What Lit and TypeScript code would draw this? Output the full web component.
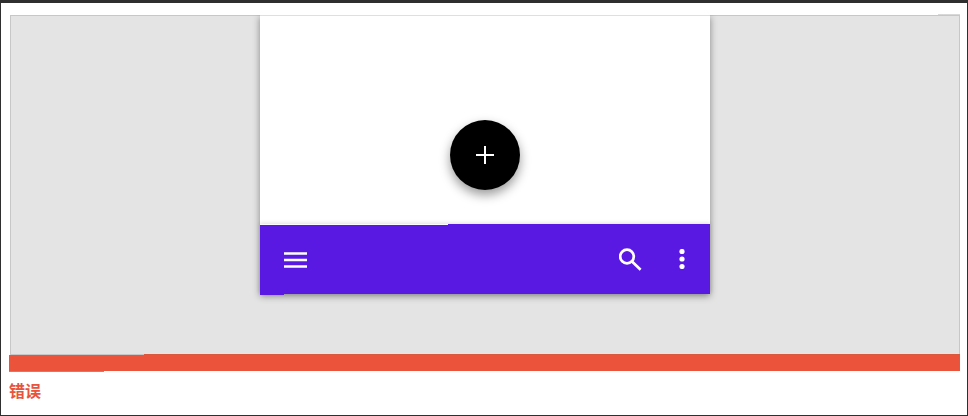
import { LitElement, html, css } from "lit";
import { customElement } from "lit/decorators.js";

@customElement("app-root")
export class AppRoot extends LitElement {
  static styles = css`
    :host {
      display: block;
      width: 968px;
      height: 416px;
      box-sizing: border-box;
      background: #fff;
      border: 1px solid #2f2f2f;
      border-top-width: 3px;
      padding: 12px 6px 0 8px;
      font-family: "Noto Sans CJK SC", "Liberation Sans", sans-serif;
    }
    .frame {
      position: relative;
      margin-left: 1px;
      width: 950px;
      height: 340px;
    }
    .frame::before {
      content: "";
      position: absolute;
      top: -1px;
      right: 0;
      width: 22px;
      height: 1px;
      background: #d8d8d8;
    }
    .stage {
      position: relative;
      height: 100%;
      background: #e4e4e4;
      overflow: hidden;
      display: flex;
      justify-content: center;
    }
    .stage::after {
      content: "";
      position: absolute;
      inset: 0;
      border: 1px solid rgba(0, 0, 0, 0.125);
      pointer-events: none;
    }
    .phone {
      width: 450px;
      height: 279px;
      display: flex;
      flex-direction: column;
      box-shadow: 0 2px 7px rgba(0, 0, 0, 0.42);
    }
    .body {
      flex: 1;
      background: #fff;
      display: flex;
      justify-content: center;
      align-items: flex-end;
      padding-bottom: 34px;
    }
    .fab {
      width: 70px;
      height: 70px;
      border-radius: 50%;
      background: #000;
      display: flex;
      align-items: center;
      justify-content: center;
      box-shadow: 0 5px 11px rgba(0, 0, 0, 0.4);
    }
    .bar {
      height: 70px;
      background: #5a19e3;
      box-shadow: 0 -1px 4px rgba(0, 0, 0, 0.12);
      display: flex;
      align-items: center;
      padding: 0 25px 0 24px;
      position: relative;
    }
    .bar::before {
      content: "";
      position: absolute;
      top: 0;
      left: 0;
      width: 188px;
      height: 1px;
      background: #fbfbfb;
    }
    .bar::after {
      content: "";
      position: absolute;
      bottom: -1px;
      left: 0;
      width: 24px;
      height: 1px;
      background: #5a19e3;
    }
    .spacer {
      flex: 1;
    }
    svg {
      display: block;
      fill: none;
      stroke: #fff;
    }
    .menu {
      margin-top: 2px;
    }
    .search {
      margin-right: 36px;
    }
    .dots {
      fill: #fff;
      stroke: none;
    }
    .error-bar {
      position: relative;
      width: 951px;
      height: 16px;
      background: #eb533b;
    }
    .error-bar::before {
      content: "";
      position: absolute;
      top: -1px;
      left: 135px;
      right: 0;
      height: 1px;
      background: #d9593f;
    }
    .error-bar::after {
      content: "";
      position: absolute;
      bottom: -1px;
      left: 0;
      width: 95px;
      height: 1px;
      background: #ee6f5b;
    }
    .error {
      margin-top: 8px;
      font-size: 16px;
      line-height: 22px;
      font-weight: 700;
      color: #e8533d;
    }
  `;

  render() {
    return html`
      <div class="frame">
        <div class="stage">
          <div class="phone">
            <div class="body">
              <div class="fab">
                <svg width="20" height="20" viewBox="0 0 20 20" stroke-width="2">
                  <path d="M1 10H19M10 1V19" />
                </svg>
              </div>
            </div>
            <div class="bar">
              <svg class="menu" width="23" height="16" viewBox="0 0 23 16" stroke-width="2.6">
                <path d="M0 1.5H23M0 8H23M0 14.5H23" />
              </svg>
              <div class="spacer"></div>
              <svg class="search" width="24" height="24" viewBox="0 0 24 24" stroke-width="2.7">
                <circle cx="8" cy="9.5" r="6.8" />
                <path d="M13 14.5L21.6 22.8" />
              </svg>
              <svg class="dots" width="6" height="20" viewBox="0 0 6 20">
                <circle cx="3" cy="2.5" r="2.6" />
                <circle cx="3" cy="10" r="2.6" />
                <circle cx="3" cy="17.5" r="2.6" />
              </svg>
            </div>
          </div>
        </div>
      </div>
      <div class="error-bar"></div>
      <div class="error">错误</div>
    `;
  }
}
